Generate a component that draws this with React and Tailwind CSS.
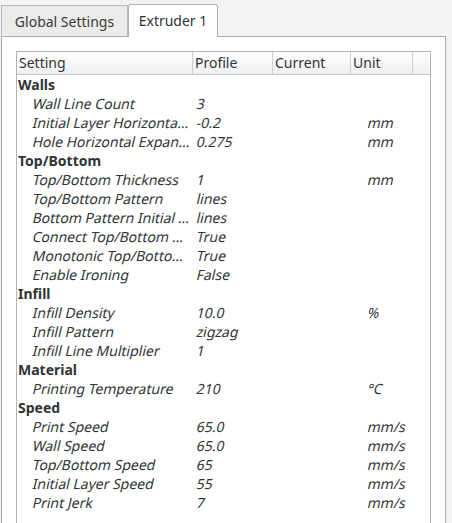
import React from "react";

const groups = [
  {
    name: "Walls",
    rows: [
      ["Wall Line Count", "3", ""],
      ["Initial Layer Horizontal Expansion", "-0.2", "mm"],
      ["Hole Horizontal Expansion", "0.275", "mm"],
    ],
  },
  {
    name: "Top/Bottom",
    rows: [
      ["Top/Bottom Thickness", "1", "mm"],
      ["Top/Bottom Pattern", "lines", ""],
      ["Bottom Pattern Initial Layer", "lines", ""],
      ["Connect Top/Bottom Polygons", "True", ""],
      ["Monotonic Top/Bottom Order", "True", ""],
      ["Enable Ironing", "False", ""],
    ],
  },
  {
    name: "Infill",
    rows: [
      ["Infill Density", "10.0", "%"],
      ["Infill Pattern", "zigzag", ""],
      ["Infill Line Multiplier", "1", ""],
    ],
  },
  {
    name: "Material",
    rows: [["Printing Temperature", "210", "°C"]],
  },
  {
    name: "Speed",
    rows: [
      ["Print Speed", "65.0", "mm/s"],
      ["Wall Speed", "65.0", "mm/s"],
      ["Top/Bottom Speed", "65", "mm/s"],
      ["Initial Layer Speed", "55", "mm/s"],
      ["Print Jerk", "7", "mm/s"],
    ],
  },
];

const cols = "grid grid-cols-[176px_80px_78px_62px_1fr]";

export default function App() {
  return (
    <div className="w-[452px] h-[523px] overflow-hidden bg-[#f4f3f2] font-['Noto_Sans',sans-serif] text-[14px] text-[#2e3436]">
      {/* Tabs */}
      <div className="flex items-end h-[36px] pl-[1px]">
        <div className="h-[31px] w-[127px] border border-b-0 border-[#b8b8b8] bg-[#ebebea] flex items-center justify-center text-[#3a3a3a]">
          Global Settings
        </div>
        <div className="relative z-10 -mb-[1px] h-[33px] w-[90px] border border-b-0 border-[#b0b0b0] rounded-t-[3px] bg-white flex items-center justify-center pb-[2px]">
          Extruder 1
        </div>
      </div>

      {/* Pane */}
      <div className="ml-[1px] w-[445px] h-[487px] border border-b-0 border-[#a9a9a9] bg-white pt-[14px] pl-[14px]">
        <div className="w-[415px] h-[480px] border border-b-0 border-[#b4b4b4]">
          <div className={`${cols} h-[23px] border-b border-[#c4c4c4] bg-gradient-to-b from-white to-[#efefef] text-[#333]`}>
            <div className="pl-[2px] leading-[22px] border-r border-[#cfcfcf]">Setting</div>
            <div className="pl-[2px] leading-[22px] border-r border-[#cfcfcf]">Profile</div>
            <div className="pl-[2px] leading-[22px] border-r border-[#cfcfcf]">Current</div>
            <div className="pl-[2px] leading-[22px] border-r border-[#cfcfcf]">Unit</div>
            <div />
          </div>
          <div>
            {groups.map((g) => (
              <div key={g.name}>
                <div className="h-[19px] leading-[19px] pl-[1px] font-bold">{g.name}</div>
                {g.rows.map(([s, p, u]) => (
                  <div key={s} className={`${cols} h-[19px] leading-[19px] -skew-x-[13deg]`}>
                    <div className="pl-[16px] pr-[2px] truncate">{s}</div>
                    <div className="pl-[4px]">{p}</div>
                    <div />
                    <div className="pl-[17px]">{u}</div>
                    <div />
                  </div>
                ))}
              </div>
            ))}
          </div>
        </div>
      </div>
    </div>
  );
}
